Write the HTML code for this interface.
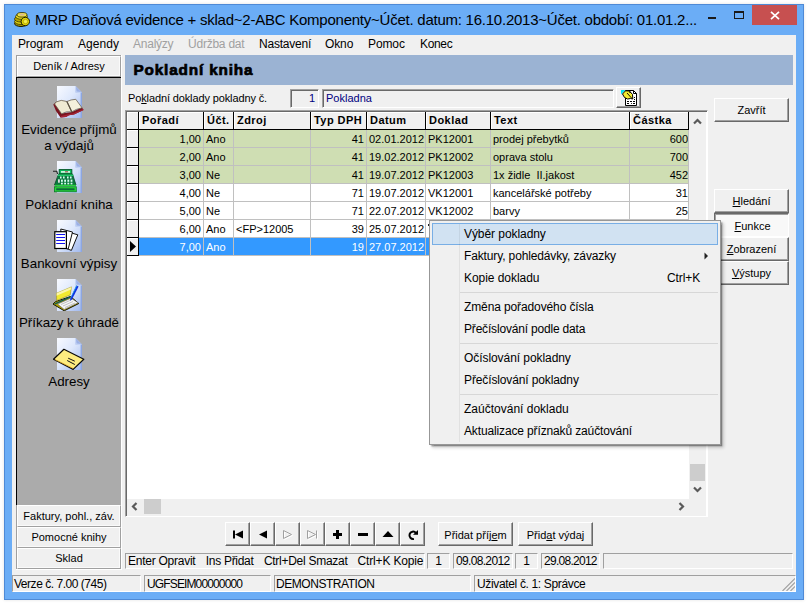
<!DOCTYPE html>
<html><head><meta charset="utf-8">
<style>
*{box-sizing:border-box;margin:0;padding:0}
html,body{width:809px;height:604px;overflow:hidden;background:#fff}
body{font-family:"Liberation Sans",sans-serif;font-size:11px;color:#000;position:relative}
.a{position:absolute;white-space:nowrap}
#win{left:4px;top:4px;width:800px;height:596px;background:#6badf6;border:1px solid #4f8ad6;box-shadow:0 0 3px rgba(0,0,0,0.12)}
#client{left:12px;top:35px;width:784px;height:557px;background:#f0f0f0}
.ttl{left:35px;top:11px;font-size:15px;line-height:18px;color:#000;letter-spacing:-0.24px}
.mi{top:37px;font-size:12px;line-height:15px}
.btn2{background:#f0f0f0;border:1px solid;border-color:#fff #a0a0a0 #a0a0a0 #fff;text-align:center}
.btn3{background:#f0f0f0;border:1px solid;border-color:#fff #a0a0a0 #a0a0a0 #fff;box-shadow:inset -1px -1px 0 #fafafa;text-align:center}
.btn{background:#f0f0f0;border:1px solid;border-color:#fff #696969 #696969 #fff;box-shadow:inset -1px -1px 0 #a0a0a0;text-align:center}
.sunk{border:1px solid;border-color:#a0a0a0 #fff #fff #a0a0a0}
.sunk2{border:1px solid;border-color:#a0a0a0 #fff #fff #a0a0a0;box-shadow:inset 1px 1px 0 #696969}
u{text-decoration:underline}

.lbl{left:17px;width:104px;text-align:center;font-size:13.33px;line-height:16px}
.lb{left:17px;width:104px;height:21px;font-size:11px;line-height:19px}

.hdr{left:125px;top:55px;width:668px;height:30px;background:#9bb3d3}
.hdrt{left:133.5px;top:59px;font-size:15.3px;font-weight:bold;line-height:22px;letter-spacing:0.85px;-webkit-text-stroke:0.7px #000}
.fld{background:#f0f0f0;color:#000080;font-size:11px;line-height:15px;height:19px;top:89px}
.gh{top:112px;height:18px;background:#f0f0f0;border-right:1px solid #000;border-bottom:1px solid #000;box-shadow:inset 1px 1px 0 #fff;font-weight:bold;font-size:11px;line-height:16px;padding-left:3px;overflow:hidden;letter-spacing:0.45px}
.row{left:139px;width:550px;height:18px;border-bottom:1px solid #c0c0c0}
.c{top:0;height:17px;border-right:1px solid #c0c0c0;font-size:11px;line-height:18px;padding:0 2px;overflow:hidden;white-space:pre}
.ind{left:127px;width:12px;height:18px;background:#f0f0f0;border-right:1px solid #000;border-bottom:1px solid #000;box-shadow:inset 1px 1px 0 #fff}
.g{background:#cfdeb3}
.w{background:#fff}
.sel{background:#3399ff;color:#fff}
.r{text-align:right}

.rb{left:714px;width:75px;height:24px;font-size:11px;line-height:23px}
.nb{top:522px;width:25px;height:24px}
.sp{top:553px;height:16px;font-size:12px;line-height:14px;border:1px solid;border-color:#a0a0a0 #fff #fff #a0a0a0;padding-left:2px}
.st{top:577px;font-size:12px;line-height:15px}

.stp{top:575px;height:17px;border:1px solid;border-color:#a0a0a0 #fff #fff #a0a0a0}
#menu{left:429px;top:220px;width:292px;height:225px;background:#f0f0f0;border:1px solid #979797;box-shadow:1.5px 1.5px 1.5px rgba(0,0,0,0.38),3px 3px 3px rgba(0,0,0,0.16)}
.m{left:464px;font-size:12px;line-height:16px;color:#000;letter-spacing:-0.1px}
.ms{left:460px;width:258px;height:1px;background:#d7d7d7}
</style></head><body>
<div class="a" id="win"></div>
<div class="a ttl">MRP Daňová evidence + sklad~2-ABC Komponenty~Účet. datum: 16.10.2013~Účet. období: 01.01.2...</div>

<!-- titlebar controls -->
<div class="a" style="left:708px;top:17px;width:8px;height:2px;background:#1a1a1a"></div>
<div class="a" style="left:734px;top:11px;width:10px;height:8px;border:1px solid #1a1a1a;border-top-width:2px"></div>
<div class="a" style="left:752px;top:5px;width:45px;height:20px;background:#c75050"></div>
<svg class="a" style="left:770px;top:11px" width="10" height="9" viewBox="0 0 10 9"><path d="M1 0.8 L9 8.2 M9 0.8 L1 8.2" stroke="#fff" stroke-width="1.7"></path></svg>
<!-- app icon -->
<svg class="a" style="left:13.4px;top:11.3px" width="18" height="17" viewBox="0 0 18 17">
<ellipse cx="8" cy="12.5" rx="6.5" ry="3" fill="#a89a00" stroke="#1a1a00" stroke-width="1"></ellipse>
<ellipse cx="8" cy="10.5" rx="6.5" ry="3" fill="#d8cc10" stroke="#3a3400" stroke-width="0.8"></ellipse>
<ellipse cx="8" cy="8" rx="6.5" ry="3" fill="#b8aa00" stroke="#3a3400" stroke-width="0.8"></ellipse>
<ellipse cx="8.5" cy="5.5" rx="6" ry="2.8" fill="#e8dc20" stroke="#3a3400" stroke-width="0.8"></ellipse>
<ellipse cx="9" cy="3.8" rx="5" ry="2.3" fill="#f0e640" stroke="#2a2600" stroke-width="0.8"></ellipse>
<ellipse cx="9" cy="3.6" rx="3" ry="1.1" fill="#d8b890"></ellipse>
<circle cx="12.3" cy="10.5" r="4.2" fill="#e4d800" stroke="#1a1a00" stroke-width="1"></circle>
<circle cx="12.5" cy="10.5" r="2.2" fill="#f4ee50" stroke="#a89a00" stroke-width="0.7"></circle>
</svg>
<div class="a" id="client"></div>

<!-- menubar -->
<div class="a mi" style="left: 18px; letter-spacing: -0.145px;">Program</div>
<div class="a mi" style="left: 78px; letter-spacing: 0.049px;">Agendy</div>
<div class="a mi" style="left: 133px; color: rgb(160, 160, 160); letter-spacing: -0.233px;">Analýzy</div>
<div class="a mi" style="left: 188px; color: rgb(160, 160, 160); letter-spacing: -0.23px;">Údržba dat</div>
<div class="a mi" style="left: 259px; letter-spacing: -0.226px;">Nastavení</div>
<div class="a mi" style="left: 325px; letter-spacing: -0.122px;">Okno</div>
<div class="a mi" style="left: 368px; letter-spacing: -0.112px;">Pomoc</div>
<div class="a mi" style="left: 420px; letter-spacing: -0.326px;">Konec</div>


<!-- left panel -->
<div class="a" style="left:16px;top:55px;width:1px;height:515px;background:#a0a0a0"></div><div class="a" style="left:16px;top:55px;width:105px;height:1px;background:#a0a0a0"></div><div class="a" style="left:121px;top:55px;width:1px;height:515px;background:#fff"></div><div class="a" style="left:16px;top:569px;width:106px;height:1px;background:#fff"></div>

<div class="a btn3" style="left:17px;top:56px;width:104px;height:21px;font-size:11px;line-height:19px">Deník / Adresy</div>
<div class="a" style="left:16px;top:77px;width:105px;height:428px;background:#ababab;border-left:1px solid #000;border-top:1px solid #000"></div>
<div class="a lbl" style="top:122px">Evidence příjmů<br>a výdajů</div>
<div class="a lbl" style="top:197px">Pokladní kniha</div>
<div class="a lbl" style="top:256px">Bankovní výpisy</div>
<div class="a lbl" style="top:315px">Příkazy k úhradě</div>
<div class="a lbl" style="top:374px">Adresy</div>
<div class="a btn3 lb" style="top:505px;height:22px;line-height:21px">Faktury, pohl., záv.</div>
<div class="a btn3 lb" style="top:527px">Pomocné knihy</div>
<div class="a btn3 lb" style="top:548px">Sklad</div>

<!-- icons -->
<svg class="a" style="left:53px;top:86px" width="32" height="32" viewBox="0 0 32 32"><defs><linearGradient id="pg1" x1="0" y1="0" x2="1" y2="1"><stop offset="0" stop-color="#f8faff"></stop><stop offset="0.45" stop-color="#dee8fc"></stop><stop offset="1" stop-color="#a0b8ee"></stop></linearGradient></defs>
<path d="M4 0 H22.5 L29 6.5 V32 H4 Z" fill="url(#pg1)"></path><path d="M22.5 0 L29 6.5 H22.5 Z" fill="#9cb0e4"></path><path d="M22.5 0.5 L23 6 L28.5 6.5" fill="none" stroke="#c8d8f8" stroke-width="1"></path><path d="M28.3 6.5 V32" stroke="#8ca6e2" stroke-width="1.4"></path>
<path d="M0.3 18.5 L3 16 L8.6 27.5 L18.8 26 L29 21.5 L30.6 24 L21 28.5 L16 29.3 L13 31 L7.5 31.6 L3 25 Z" fill="#7a1420"></path>
<path d="M7.5 31.6 L13 31 L16 29.3 L21 28.5 L30.6 24 L30 23 L20.5 27.3 L15 28.3 L8 30 Z" fill="#a42434"></path>
<path d="M1.6 18 L3 16 Q8 13 13.9 15.5 L18.8 25.8 Q13 25 8.6 27.8 Z" fill="#efead2" stroke="#6a6050" stroke-width="0.8"></path>
<path d="M13.9 15.5 Q18 13.5 22.8 13.3 L29 21.8 Q23 23 18.8 25.8 Z" fill="#f4f0dc" stroke="#6a6050" stroke-width="0.8"></path>
<path d="M13.9 15.5 L18.8 25.8" stroke="#5a5040" stroke-width="1.1"></path>
</svg>
<svg class="a" style="left:53px;top:161px" width="32" height="32" viewBox="0 0 32 32"><defs><linearGradient id="pg2" x1="0" y1="0" x2="1" y2="1"><stop offset="0" stop-color="#f8faff"></stop><stop offset="0.45" stop-color="#dee8fc"></stop><stop offset="1" stop-color="#a0b8ee"></stop></linearGradient></defs>
<path d="M4 0 H22.5 L29 6.5 V32 H4 Z" fill="url(#pg2)"></path><path d="M22.5 0 L29 6.5 H22.5 Z" fill="#9cb0e4"></path><path d="M22.5 0.5 L23 6 L28.5 6.5" fill="none" stroke="#c8d8f8" stroke-width="1"></path><path d="M28.3 6.5 V32" stroke="#8ca6e2" stroke-width="1.4"></path>
<path d="M0 10.3 H3.8 L4.6 13" stroke="#222" stroke-width="1.1" fill="none"></path>
<rect x="6.2" y="8.6" width="12.6" height="4.4" fill="#10c060" stroke="#065a2c" stroke-width="1"></rect>
<rect x="8" y="10" width="9" height="1.8" fill="#c8f4dc"></rect><rect x="12" y="10.3" width="3" height="1" fill="#a04040"></rect>
<path d="M5.5 13 H19.5 L23 24 H1.5 Z" fill="#0c7840" stroke="#054a24" stroke-width="0.8"></path>
<path d="M5 13.5 H20 L20.5 15 H4.5 Z" fill="#20c868"></path>
<g fill="#d8fff0"><rect x="7" y="15.5" width="1.6" height="2"></rect><rect x="10" y="15.5" width="1.6" height="2"></rect><rect x="14" y="15.5" width="1.6" height="2"></rect><rect x="17" y="15.5" width="1.6" height="2"></rect>
<rect x="8" y="18.6" width="1.8" height="2.2"></rect><rect x="11.2" y="18.6" width="1.8" height="2.2"></rect><rect x="14.4" y="18.6" width="1.8" height="2.2"></rect><rect x="17.6" y="18.6" width="1.8" height="2.2"></rect>
<rect x="8" y="21.7" width="1.8" height="1.8"></rect><rect x="11.2" y="21.7" width="1.8" height="1.8"></rect><rect x="14.4" y="21.7" width="1.8" height="1.8"></rect><rect x="17.6" y="21.7" width="1.8" height="1.8"></rect>
<rect x="5" y="18.3" width="1.8" height="3.4" fill="#e0e0e0"></rect></g>
<rect x="2" y="23.7" width="21" height="1.6" fill="#28d040"></rect>
<rect x="1.5" y="25.8" width="21.8" height="5" fill="#28d838" stroke="#0a7a28" stroke-width="0.8"></rect>
<rect x="3.2" y="27.3" width="18.4" height="2" fill="#0a6a38"></rect>
</svg>
<svg class="a" style="left:53px;top:220px" width="32" height="32" viewBox="0 0 32 32"><defs><linearGradient id="pg3" x1="0" y1="0" x2="1" y2="1"><stop offset="0" stop-color="#f8faff"></stop><stop offset="0.45" stop-color="#dee8fc"></stop><stop offset="1" stop-color="#a0b8ee"></stop></linearGradient></defs>
<path d="M4 0 H22.5 L29 6.5 V32 H4 Z" fill="url(#pg3)"></path><path d="M22.5 0 L29 6.5 H22.5 Z" fill="#9cb0e4"></path><path d="M22.5 0.5 L23 6 L28.5 6.5" fill="none" stroke="#c8d8f8" stroke-width="1"></path><path d="M28.3 6.5 V32" stroke="#8ca6e2" stroke-width="1.4"></path>
<path d="M18.5 13 L24.8 14.8 L18.4 30.4 L13.5 28.5 Z" fill="#fff" stroke="#111" stroke-width="1"></path>
<path d="M7.8 9 L19.5 12 L15.2 29 L8 27.5 Z" fill="#fff" stroke="#111" stroke-width="1"></path>
<rect x="1.8" y="11.7" width="11.6" height="16.8" fill="#fff" stroke="#000" stroke-width="1.2"></rect>
<path d="M3.2 14.5 H12 M3.2 17.5 H12 M3.2 20.5 H12 M3.2 23.5 H12" stroke="#1010f0" stroke-width="1.1"></path>
</svg>
<svg class="a" style="left:53px;top:279px" width="32" height="32" viewBox="0 0 32 32"><defs><linearGradient id="pg4" x1="0" y1="0" x2="1" y2="1"><stop offset="0" stop-color="#f8faff"></stop><stop offset="0.45" stop-color="#dee8fc"></stop><stop offset="1" stop-color="#a0b8ee"></stop></linearGradient></defs>
<path d="M4 0 H22.5 L29 6.5 V32 H4 Z" fill="url(#pg4)"></path><path d="M22.5 0 L29 6.5 H22.5 Z" fill="#9cb0e4"></path><path d="M22.5 0.5 L23 6 L28.5 6.5" fill="none" stroke="#c8d8f8" stroke-width="1"></path><path d="M28.3 6.5 V32" stroke="#8ca6e2" stroke-width="1.4"></path>
<path d="M0 25.1 L2.6 22.5 L17.5 17.5 L25.8 24.5 L11.2 31.8 Z" fill="#b0a000" stroke="#1a1a00" stroke-width="1"></path>
<path d="M4.6 25.1 L17.9 19.2 L25.1 23.8 L11.2 30.4 Z" fill="#f6f6f6" stroke="#556" stroke-width="0.5"></path>
<path d="M8 25.5 L18 21 M10 27 L20 22.5 M12 28.5 L22 24" stroke="#b4b4b4" stroke-width="0.8"></path>
<path d="M3.6 14.2 L18.5 7.9 L17.2 15.9 L3.6 21.5 Z" fill="#f2ea30" stroke="#a09020" stroke-width="0.6"></path>
<path d="M3.6 14.2 L18.5 7.9 L18 10.5 L3.6 16.8 Z" fill="#faf6a8"></path>
<path d="M1.3 24.5 L17.2 17.2 L17.6 18.6 L2.2 25.6 Z" fill="#0a5858"></path>
<path d="M23.3 6.5 L25.6 7.5 L18.8 20.8 L17 21.8 L17.3 19.5 Z" fill="#1030e0"></path>
<path d="M23.3 6.5 L24 6.8 L17.6 19.6 L17.3 19.5 Z" fill="#20c0f0"></path>
</svg>
<svg class="a" style="left:53px;top:338px" width="32" height="32" viewBox="0 0 32 32"><defs><linearGradient id="pg5" x1="0" y1="0" x2="1" y2="1"><stop offset="0" stop-color="#f8faff"></stop><stop offset="0.45" stop-color="#dee8fc"></stop><stop offset="1" stop-color="#a0b8ee"></stop></linearGradient></defs>
<path d="M4 0 H22.5 L29 6.5 V32 H4 Z" fill="url(#pg5)"></path><path d="M22.5 0 L29 6.5 H22.5 Z" fill="#9cb0e4"></path><path d="M22.5 0.5 L23 6 L28.5 6.5" fill="none" stroke="#c8d8f8" stroke-width="1"></path><path d="M28.3 6.5 V32" stroke="#8ca6e2" stroke-width="1.4"></path>
<path d="M0.5 21.2 L10.9 11.3 L30.8 21.2 L20.2 31.4 Z" fill="#fdec80" stroke="#0a0a0a" stroke-width="1.2" stroke-linejoin="round"></path>
<path d="M2 21.5 L20 30.3" stroke="#f0b830" stroke-width="0.8"></path>
<path d="M15.2 20.2 L21.8 23.2 M14.2 22.5 L21.8 26.5" stroke="#111" stroke-width="1"></path>
</svg>
<!-- header + fields -->
<div class="a hdr"></div><div class="a hdrt">Pokladní kniha</div>
<div class="a" style="left: 128px; top: 91px; font-size: 11px; line-height: 15px; letter-spacing: -0.125px;">Po<u>k</u>ladní doklady pokladny č.</div>
<div class="a fld sunk2 r" style="left:290px;width:29px;padding:1px 3px 0 0">1</div>
<div class="a fld sunk2" style="left:322px;width:292px;padding:1px 0 0 3px">Pokladna</div>
<div class="a btn" style="left:616px;top:87px;width:25px;height:21px"></div>
<!-- grid -->
<div class="a" style="left:125px;top:110px;width:583px;height:407px;background:#fff;border:1px solid;border-color:#a0a0a0 #fff #fff #a0a0a0;box-shadow:inset 1px 1px 0 #696969"></div>
<div class="a gh" style="left:127px;width:12px"></div>
<div class="a gh" style="left:139px;width:65px">Pořadí</div>
<div class="a gh" style="left:204px;width:30px">Účt.</div>
<div class="a gh" style="left:234px;width:77px">Zdroj</div>
<div class="a gh" style="left:311px;width:56px">Typ DPH</div>
<div class="a gh" style="left:367px;width:59px">Datum</div>
<div class="a gh" style="left:426px;width:65px">Doklad</div>
<div class="a gh" style="left:491px;width:139px">Text</div>
<div class="a gh" style="left:630px;width:59px">Částka</div>
<div class="a ind" style="top:130px"></div><div class="a row g" style="top:130px"><div class="a c r" style="left:0px;width:65px">1,00</div><div class="a c" style="left:65px;width:30px">Ano</div><div class="a c" style="left:95px;width:77px"></div><div class="a c r" style="left:172px;width:56px">41</div><div class="a c" style="left:228px;width:59px">02.01.2012</div><div class="a c" style="left:287px;width:65px">PK12001</div><div class="a c" style="left:352px;width:139px">prodej přebytků</div><div class="a c r" style="left:491px;width:59px;padding-right:0">600</div></div>
<div class="a ind" style="top:148px"></div><div class="a row g" style="top:148px"><div class="a c r" style="left:0px;width:65px">2,00</div><div class="a c" style="left:65px;width:30px">Ano</div><div class="a c" style="left:95px;width:77px"></div><div class="a c r" style="left:172px;width:56px">41</div><div class="a c" style="left:228px;width:59px">19.02.2012</div><div class="a c" style="left:287px;width:65px">PK12002</div><div class="a c" style="left:352px;width:139px">oprava stolu</div><div class="a c r" style="left:491px;width:59px;padding-right:0">700</div></div>
<div class="a ind" style="top:166px"></div><div class="a row g" style="top:166px"><div class="a c r" style="left:0px;width:65px">3,00</div><div class="a c" style="left:65px;width:30px">Ne</div><div class="a c" style="left:95px;width:77px"></div><div class="a c r" style="left:172px;width:56px">41</div><div class="a c" style="left:228px;width:59px">19.07.2012</div><div class="a c" style="left:287px;width:65px">PK12003</div><div class="a c" style="left:352px;width:139px">1x židle  II.jakost</div><div class="a c r" style="left:491px;width:59px;padding-right:0">452</div></div>
<div class="a ind" style="top:184px"></div><div class="a row w" style="top:184px"><div class="a c r" style="left:0px;width:65px">4,00</div><div class="a c" style="left:65px;width:30px">Ne</div><div class="a c" style="left:95px;width:77px"></div><div class="a c r" style="left:172px;width:56px">71</div><div class="a c" style="left:228px;width:59px">19.07.2012</div><div class="a c" style="left:287px;width:65px">VK12001</div><div class="a c" style="left:352px;width:139px">kancelářské potřeby</div><div class="a c r" style="left:491px;width:59px;padding-right:0">31</div></div>
<div class="a ind" style="top:202px"></div><div class="a row w" style="top:202px"><div class="a c r" style="left:0px;width:65px">5,00</div><div class="a c" style="left:65px;width:30px">Ne</div><div class="a c" style="left:95px;width:77px"></div><div class="a c r" style="left:172px;width:56px">71</div><div class="a c" style="left:228px;width:59px">22.07.2012</div><div class="a c" style="left:287px;width:65px">VK12002</div><div class="a c" style="left:352px;width:139px">barvy</div><div class="a c r" style="left:491px;width:59px;padding-right:0">25</div></div>
<div class="a ind" style="top:220px"></div><div class="a row w" style="top:220px"><div class="a c r" style="left:0px;width:65px">6,00</div><div class="a c" style="left:65px;width:30px">Ano</div><div class="a c" style="left:95px;width:77px">&lt;FP&gt;12005</div><div class="a c r" style="left:172px;width:56px">39</div><div class="a c" style="left:228px;width:59px">25.07.2012</div><div class="a c" style="left:287px;width:65px"></div><div class="a c" style="left:352px;width:139px"></div><div class="a c r" style="left:491px;width:59px;padding-right:0"></div></div>
<div class="a ind" style="top:238px"></div><div class="a row sel" style="top:238px"><div class="a c r" style="left:0px;width:65px">7,00</div><div class="a c" style="left:65px;width:30px">Ano</div><div class="a c" style="left:95px;width:77px"></div><div class="a c r" style="left:172px;width:56px">19</div><div class="a c" style="left:228px;width:59px">27.07.2012</div><div class="a c" style="left:287px;width:65px"></div><div class="a c" style="left:352px;width:139px"></div><div class="a c r" style="left:491px;width:59px;padding-right:0"></div></div>

<!-- scrollbars -->
<div class="a" style="left:689px;top:112px;width:17px;height:403px;background:#f0f0f0"></div>
<div class="a" style="left:127px;top:499px;width:579px;height:17px;background:#f0f0f0"></div>
<div class="a" style="left:690px;top:464px;width:15px;height:17px;background:#cdcdcd"></div>
<div class="a" style="left:144px;top:499px;width:17px;height:15px;background:#cdcdcd"></div>
<svg class="a" style="left:693px;top:117px" width="9" height="9" viewBox="0 0 9 9"><path d="M1 6.5 L4.5 3 L8 6.5" fill="none" stroke="#5a5a5a" stroke-width="2.2"></path></svg>
<svg class="a" style="left:693px;top:485px" width="9" height="9" viewBox="0 0 9 9"><path d="M1 2.5 L4.5 6 L8 2.5" fill="none" stroke="#5a5a5a" stroke-width="2.2"></path></svg>
<svg class="a" style="left:130px;top:502px" width="9" height="9" viewBox="0 0 9 9"><path d="M6.5 1 L3 4.5 L6.5 8" fill="none" stroke="#5a5a5a" stroke-width="2.2"></path></svg>
<svg class="a" style="left:677px;top:502px" width="9" height="9" viewBox="0 0 9 9"><path d="M2.5 1 L6 4.5 L2.5 8" fill="none" stroke="#5a5a5a" stroke-width="2.2"></path></svg>
<!-- right buttons -->
<div class="a btn rb" style="top:98px">Zavřít</div>
<div class="a btn rb" style="top:189px"><u>H</u>ledání</div>
<div class="a rb" id="fn" style="top:213px;text-align:center;line-height:24px;padding-left:2px;background:#f8f8f8;border:1px solid;border-color:#696969 #fff #fff #696969;box-shadow:inset 1px 1px 0 #a0a0a0"><u>F</u>unkce</div>
<div class="a btn rb" style="top:237px"><u>Z</u>obrazení</div>
<div class="a btn rb" style="top:261px"><u>V</u>ýstupy</div>
<!-- nav -->
<div class="a btn nb" style="left:225px"></div>
<div class="a btn nb" style="left:250px"></div>
<div class="a btn nb" style="left:275px"></div>
<div class="a btn nb" style="left:300px"></div>
<div class="a btn nb" style="left:325px"></div>
<div class="a btn nb" style="left:350px"></div>
<div class="a btn nb" style="left:375px"></div>
<div class="a btn nb" style="left:400px"></div>
<div class="a btn" style="left:438px;top:522px;width:75px;height:24px;font-size:11px;line-height:24px">Přidat příj<u>e</u>m</div>
<div class="a btn" style="left:518px;top:522px;width:75px;height:24px;font-size:11px;line-height:24px">Přid<u>a</u>t výdaj</div>
<!-- status panels -->
<div class="a sp" style="left:125px;width:300px"></div>
<div class="a" style="left: 128px; top: 554px; font-size: 12px; line-height: 14px; letter-spacing: -0.254px;">Enter Opravit</div>
<div class="a" style="left: 205.8px; top: 554px; font-size: 12px; line-height: 14px; letter-spacing: -0.3px;">Ins Přidat</div>
<div class="a" style="left: 263.9px; top: 554px; font-size: 12px; line-height: 14px; letter-spacing: -0.267px;">Ctrl+Del Smazat</div>
<div class="a" style="left: 357.6px; top: 554px; font-size: 12px; line-height: 14px; letter-spacing: -0.159px;">Ctrl+K Kopie</div>

<div class="a sp" style="left:427px;width:23px;text-align:center;padding:0">1</div>
<div class="a sp" style="left: 453px; width: 60px; letter-spacing: -0.666px;">09.08.2012</div>
<div class="a sp" style="left:515px;width:23px;text-align:center;padding:0">1</div>
<div class="a sp" style="left: 541px; width: 59px; letter-spacing: -0.726px;">29.08.2012</div>
<div class="a sp" style="left:603px;width:190px"></div>
<!-- statusbar -->
<div class="a st" style="left: 14px; letter-spacing: -0.468px;">Verze č. 7.00 (745)</div>
<div class="a st" style="left: 147px; letter-spacing: -0.864px;">UGFSEIM00000000</div>
<div class="a st" style="left: 276px; letter-spacing: -0.458px;">DEMONSTRATION</div>
<div class="a st" style="left: 477px; letter-spacing: -0.348px;">Uživatel č. 1: Správce</div>

<!-- statusbar panels -->
<div class="a stp" style="left:12px;width:129px"></div>
<div class="a stp" style="left:144px;width:127px"></div>
<div class="a stp" style="left:274px;width:197px"></div>
<div class="a stp" style="left:474px;width:322px"></div>
<svg class="a" style="left:782px;top:578px" width="13" height="13" viewBox="0 0 13 13"><path d="M0.5 13 L13 0.5 M4.5 13 L13 4.5 M8.5 13 L13 8.5" stroke="#a0a0a0" stroke-width="1.1" fill="none"></path></svg>
<!-- context menu -->
<div class="a" id="menu"></div>
<div class="a" style="left:432px;top:223px;width:286px;height:22px;background:#d1e2f2;border:1px solid #78aee5"></div>
<div class="a" style="left:459px;top:224px;width:1px;height:218px;background:rgba(0,0,0,0.06)"></div>
<div class="a" style="left:428px;top:224px;width:1px;height:2px;background:#222"></div>
<div class="a m" style="top: 226px; letter-spacing: -0.066px;">Výběr pokladny</div>
<div class="a m" style="top: 248px; letter-spacing: -0.133px;">Faktury, pohledávky, závazky</div>
<div class="a m" style="top: 270px; letter-spacing: -0.051px;">Kopie dokladu</div>
<div class="a m" style="top: 299px; letter-spacing: -0.117px;">Změna pořadového čísla</div>
<div class="a m" style="top: 321px; letter-spacing: -0.184px;">Přečíslování podle data</div>
<div class="a m" style="top: 350px; letter-spacing: -0.066px;">Očíslování pokladny</div>
<div class="a m" style="top: 372px; letter-spacing: -0.124px;">Přečíslování pokladny</div>
<div class="a m" style="top: 401px; letter-spacing: 0.003px;">Zaúčtování dokladu</div>
<div class="a m" style="top: 423px; letter-spacing: -0.136px;">Aktualizace příznaků zaúčtování</div>
<div class="a m" style="left:667px;top:270px">Ctrl+K</div>
<svg class="a" style="left:704px;top:252px" width="5" height="8" viewBox="0 0 5 8"><path d="M0.5 0.5 L4 4 L0.5 7.5 Z" fill="#222"></path></svg>
<div class="a ms" style="top:292px"></div>
<div class="a ms" style="top:343px"></div>
<div class="a ms" style="top:394px"></div>

<!-- nav glyphs -->
<svg class="a" style="left:225px;top:522px" width="200" height="24" viewBox="0 0 200 24">
<rect x="8" y="8.5" width="2" height="8" fill="#000"></rect><path d="M10 12.5 L18 8.5 V16.5 Z" fill="#000"></path>
<path d="M34 12.5 L42 8.5 V16.5 Z" fill="#000"></path>
<path d="M59.5 9.5 L67.5 13.5 L59.5 17.5 Z" fill="none" stroke="#fff" stroke-width="1"></path><path d="M58.5 8.5 L66.5 12.5 L58.5 16.5 Z" fill="none" stroke="#a0a0a0" stroke-width="1"></path>
<path d="M83.5 9.5 L91.5 13.5 L83.5 17.5 Z M92.5 9.5 V17.5" fill="none" stroke="#fff" stroke-width="1"></path><path d="M82.5 8.5 L90.5 12.5 L82.5 16.5 Z M91.5 8.5 V16.5" fill="none" stroke="#a0a0a0" stroke-width="1"></path>
<path d="M108 11 H111 V8 H114 V11 H117 V14 H114 V17 H111 V14 H108 Z" fill="#000"></path>
<rect x="133" y="11" width="10" height="3" fill="#000"></rect>
<path d="M163 9 L168.5 15 H157.5 Z" fill="#000"></path>
<path d="M188.9 16.9 A3.7 3.7 0 1 1 190.9 10.8" fill="none" stroke="#000" stroke-width="2"></path><path d="M193 8 V12.8 H188 Z" fill="#000"></path>
</svg>
<!-- small icon -->
<svg class="a" style="left:621px;top:90px" width="17" height="16" viewBox="0 0 17 16"><path d="M0 0 H4.5 L0 4.5 Z" fill="#00e0f0"></path><path d="M4.5 0.5 H12.5 L15.5 3.5 V15.5 H4.5 Z" fill="#fff" stroke="#000" stroke-width="1"></path><path d="M12.5 0.5 V3.5 H15.5" fill="none" stroke="#000" stroke-width="1"></path><path d="M6 11.5 H8 M9 11.5 H11 M12 11.5 H14 M6 13.5 H8 M10 13.5 H10.8 M12 13.5 H14 M13 7.5 H14 M13 9.5 H14" stroke="#000" stroke-width="1"></path><path d="M1.5 4 L4.5 0.8 L8.5 1 L11.5 4.5 L11.8 9 L9.5 8.5 L6.5 9 L3.5 7.5 Z" fill="#f4ec30" stroke="#000" stroke-width="1"></path><path d="M6 3 L11 8.5 M8 2 L10 2.5" stroke="#000" stroke-width="0.9" fill="none"></path></svg>
<svg class="a" style="left:129px;top:240px" width="8" height="13" viewBox="0 0 8 13"><path d="M1 1 L7 6.5 L1 12 Z" fill="#000"></path></svg>

</body></html>
